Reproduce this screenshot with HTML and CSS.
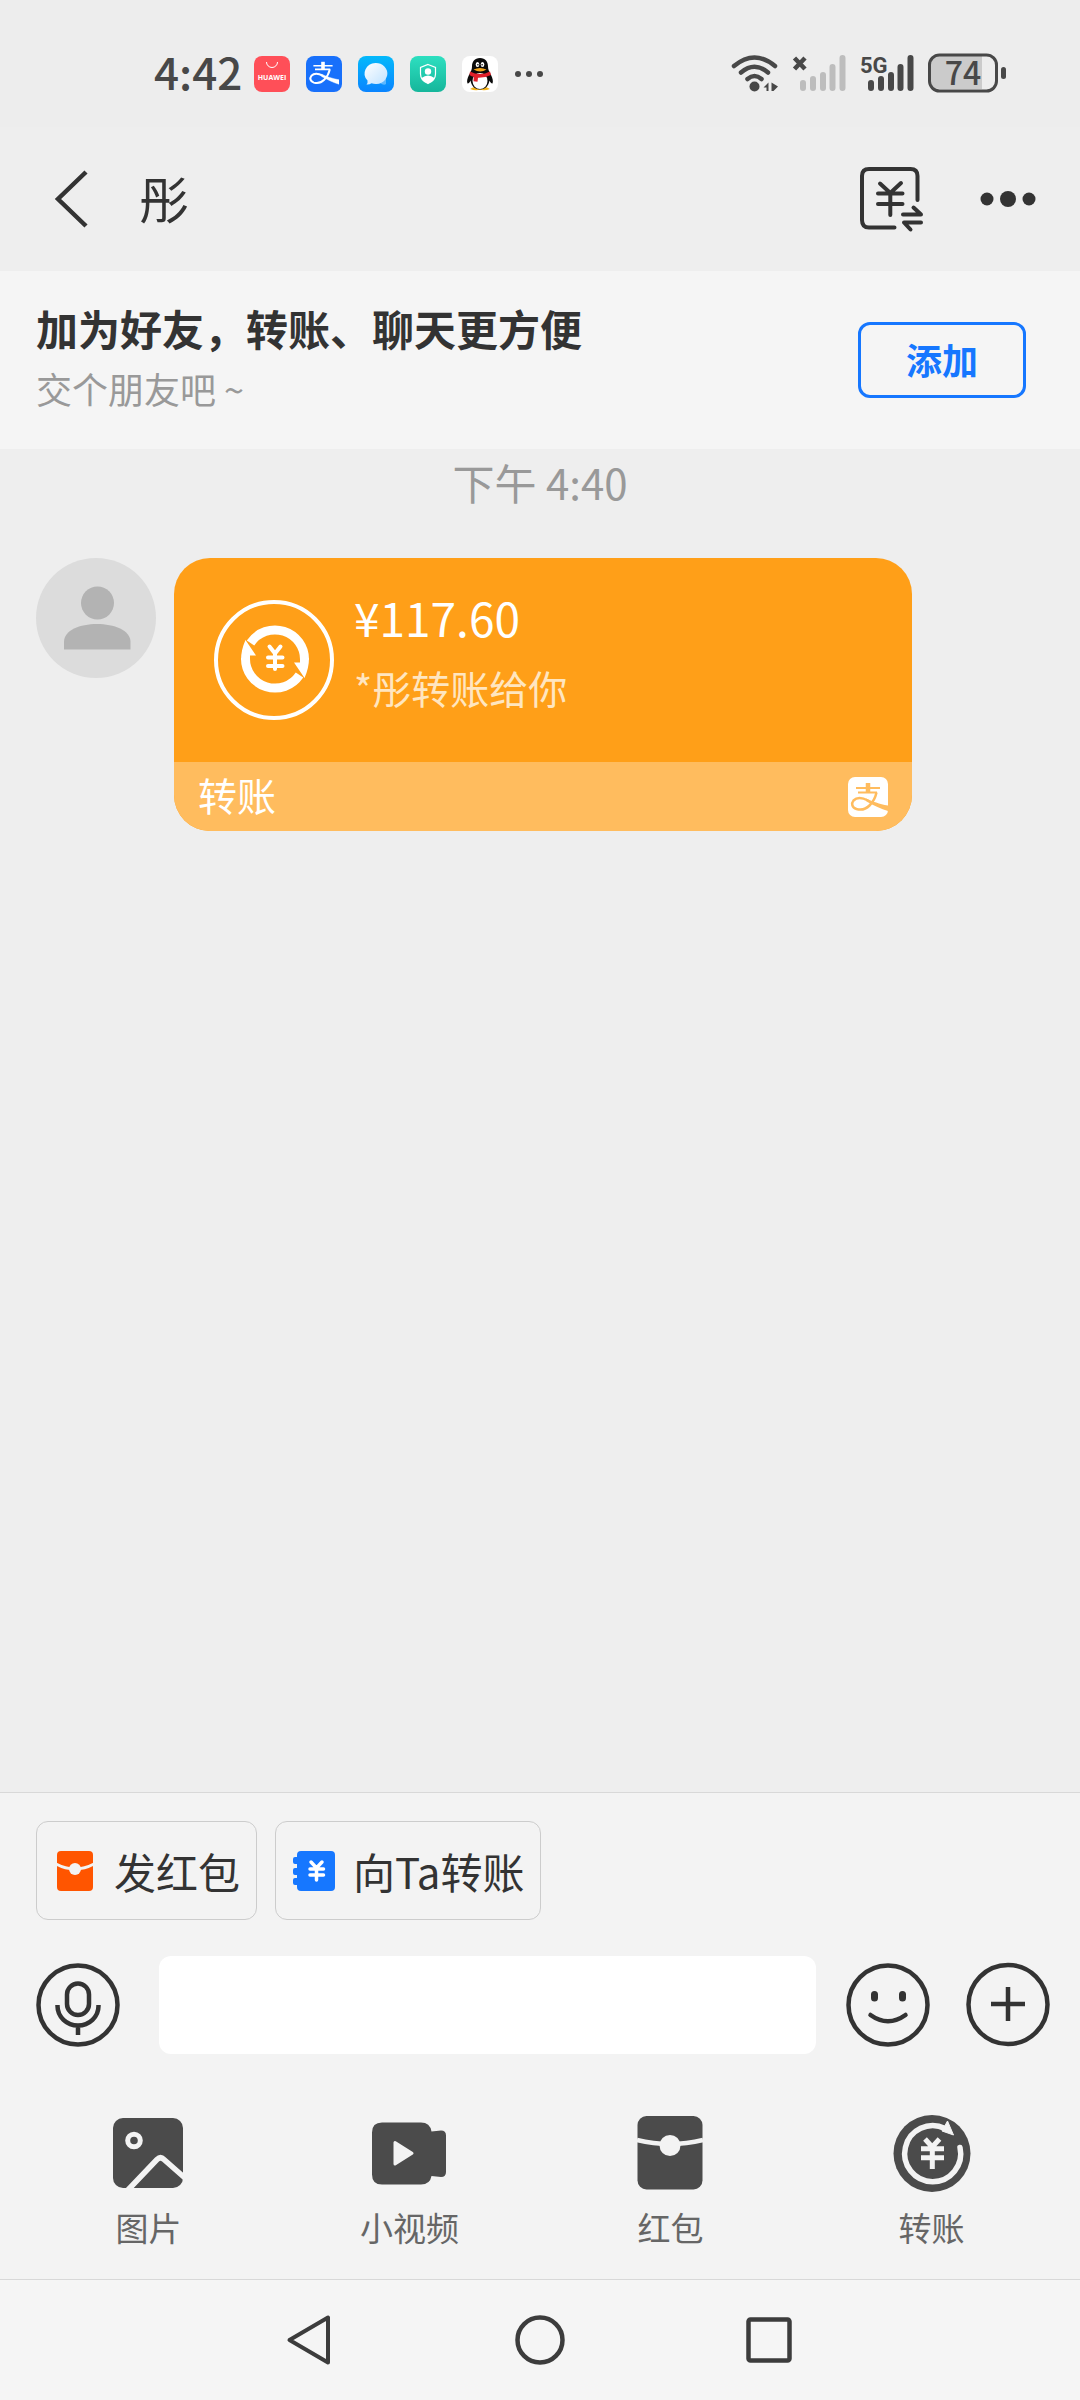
FILE: index.html
```html
<!DOCTYPE html>
<html lang="zh-CN">
<head>
<meta charset="utf-8">
<meta name="viewport" content="width=device-width, initial-scale=1">
<title>彤</title>
<link rel="stylesheet" href="styles.css">
</head>
<body>
<svg class="defs" aria-hidden="true">
  <defs>
    <symbol id="bars" viewBox="0 0 56 42">
      <path d="M11 30v5M21 26v9M31 22v13M40.500 14v21M50.500 5v30" fill="none" stroke="currentColor" stroke-width="6" stroke-linecap="round"/>
    </symbol>
    <symbol id="alipay" viewBox="0 0 40 40">
      <path d="M8 11H32M10 15.500H29" fill="none" stroke="currentColor" stroke-width="2"/>
      <path d="M20 6V16" fill="none" stroke="currentColor" stroke-width="4.500"/>
      <path d="M28.500 15.500C27.500 20 25 25 21.500 28.500C17.500 32.500 12 33 8.500 32C4 30.500 3 26.500 5.500 23.500C8.500 20.500 14 20.500 20 23.500" fill="none" stroke="currentColor" stroke-width="2.500"/>
      <path d="M18 21.500C25 24.500 31 27 40 28.500V34C33 32 26 28.500 18.500 24.500Z" fill="currentColor"/>
    </symbol>
  </defs>
</svg>

<header class="status">
  <div class="status-left">
    <span class="clock">4:42</span>
    <svg class="app" viewBox="0 0 36 36"><rect width="36" height="36" rx="8" fill="#ff4f58"/><path d="M12.500 6a5.500 5.500 0 0 0 11 0" fill="none" stroke="#fff" stroke-width="1"/><text class="app-name" x="18" y="23.500" text-anchor="middle">HUAWEI</text></svg>
    <svg class="app app-pay" viewBox="0 0 36 36"><rect width="36" height="36" rx="8" fill="#1870fb"/><g stroke="#fff" stroke-width=".6"><use href="#alipay" x="1" y="1" width="32" height="32"/></g></svg>
    <svg class="app" viewBox="0 0 36 36"><defs><linearGradient id="sky" x2="0" y2="1"><stop stop-color="#04b9fb"/><stop offset="1" stop-color="#0a84ff"/></linearGradient><linearGradient id="bub" x2="1" y2="1"><stop stop-color="#fff"/><stop offset="1" stop-color="#bfe2ff"/></linearGradient></defs><rect width="36" height="36" rx="8" fill="url(#sky)"/><path d="M22 27q4 3 6 1v-8z" fill="#5cb8ff"/><path d="M17.500 7a11.500 10.500 0 1 1-4 20.200Q11 29 8.500 28.500q1.500-2 1-4A11.500 10.500 0 0 1 17.500 7z" fill="url(#bub)"/></svg>
    <svg class="app" viewBox="0 0 36 36"><defs><linearGradient id="mint" x2="0" y2="1"><stop stop-color="#2ddfc0"/><stop offset="1" stop-color="#16b69b"/></linearGradient></defs><rect width="36" height="36" rx="8" fill="url(#mint)"/><path d="M18 8.500l7.500 3V18q0 6.500-7.500 9.500Q10.500 24.500 10.500 18v-6.500z" fill="none" stroke="#fff" stroke-width="1.200"/><circle cx="18" cy="15.500" r="3.200" fill="#fff"/><path d="M11.500 22q6.500-5 13 0-2 4-6.500 5.500Q13.500 26 11.500 22z" fill="#fff"/></svg>
    <svg class="app" viewBox="0 0 36 36"><rect width="36" height="36" rx="8" fill="#fff"/><path d="M8 33q5-3.500 10-1 5-2.500 10 1-5 2-10 .8Q13 35 8 33z" fill="#f5b31a"/><path d="M18 2c-5.500 0-8 4-8 8.500 0 3-1 5-3 8.500-1.500 3-2.500 6-1.500 8.500 1.500 0 2.500-2 3-3 .8 5 4 9 9.500 9s8.700-4 9.500-9c.5 1 1.500 3 3 3 1-2.500 0-5.500-1.500-8.500-2-3.500-3-5.500-3-8.500C26 6 23.500 2 18 2z" fill="#0b0b0b"/><ellipse cx="18" cy="25" rx="7.500" ry="8" fill="#fff"/><ellipse cx="15.500" cy="8.500" rx="1.800" ry="2.600" fill="#fff"/><ellipse cx="20.500" cy="8.500" rx="1.800" ry="2.600" fill="#fff"/><circle cx="15.900" cy="8.800" r=".8"/><circle cx="20.100" cy="8.800" r=".8"/><path d="M11.500 13.500q6.500-3 13 0-6 4-13 0z" fill="#f5a61a"/><path d="M8 15.500q10 5 20 0l1 3.500q-6 3-13 2.800l-.5 4-4-.5.300-4.500Q9.500 20.500 7.500 19z" fill="#e1202b"/></svg>
    <svg class="more-apps" viewBox="0 0 30 8" fill="currentColor"><circle cx="4" cy="4" r="3"/><circle cx="15" cy="4" r="3"/><circle cx="26" cy="4" r="3"/></svg>
  </div>
  <div class="status-right">
    <svg width="50" height="42" viewBox="0 0 50 42"><g fill="none" stroke="currentColor" stroke-width="4.500" stroke-linecap="round"><path d="M4 13Q24.500-4 45 13M11 19.500Q24.500 8 38 19.500M17.500 26Q24.500 20 31.500 26"/></g><circle cx="24.500" cy="33.500" r="5" fill="currentColor"/><path d="M38.500 29.500V38h-2v-3.500h-3zM41.500 29.500L48 33.500L43.500 38h-2z" fill="currentColor"/></svg>
    <svg width="56" height="42" viewBox="0 0 56 42"><use class="bars-off" href="#bars" width="56" height="42"/><path d="M2.500 5L13 16M13 5L2.500 16" stroke="currentColor" stroke-width="4.500"/></svg>
    <svg width="56" height="42" viewBox="0 0 56 42"><use href="#bars" width="56" height="42"/><text class="net" x="0" y="20">5G</text></svg>
    <svg width="78" height="42" viewBox="0 0 78 42"><path d="M12 3H54V36H12Q3 36 3 27V12Q3 3 12 3z" fill="#cbcbcb"/><rect x="1.500" y="2" width="67" height="36" rx="10" fill="none" stroke="currentColor" stroke-width="3"/><rect x="73" y="14" width="5" height="12" rx="2.500" fill="currentColor"/><text class="level" x="35" y="32" text-anchor="middle">74</text></svg>
  </div>
</header>

<nav class="topbar">
  <button class="icon-btn" aria-label="返回"><svg width="34" height="60" viewBox="0 0 34 60"><path d="M32 3L4 30L32 57" fill="none" stroke="currentColor" stroke-width="4.500"/></svg></button>
  <h1 class="peer">彤</h1>
  <button class="icon-btn" aria-label="转账记录"><svg width="66" height="66" viewBox="0 0 66 66" fill="none" stroke="currentColor" stroke-width="4" stroke-linecap="round" stroke-linejoin="round"><path d="M58.500 34V10Q58.500 3 51.500 3H10Q3 3 3 10V54Q3 61.500 10 61.500H35.500"/><path d="M21 17.500L31.300 27L42 17M19 27.500H43.500M19 38H43.500M31.300 27V49"/><path d="M44 48.500H62L54.500 41.500M62 56.500H45L51.500 63.500"/></svg></button>
  <button class="icon-btn" aria-label="更多"><svg width="56" height="56" viewBox="0 0 56 56" fill="currentColor"><circle cx="7" cy="28" r="6.500"/><circle cx="28" cy="28" r="8"/><circle cx="49" cy="28" r="6.500"/></svg></button>
</nav>

<section class="banner">
  <div class="banner-text">
    <h2>加为好友，转账、聊天更方便</h2>
    <p>交个朋友吧 ~</p>
  </div>
  <button class="add">添加</button>
</section>

<main class="chat">
  <time class="stamp">下午 4:40</time>
  <div class="message">
    <svg class="avatar" viewBox="0 0 120 120"><circle cx="60" cy="60" r="60" fill="#dcdcdc"/><circle cx="61.500" cy="45" r="16.500" fill="#b3b3b3"/><path d="M28 91.500V84C28 72 44 66 61 66S94.500 72 94.500 84V91.500z" fill="#b3b3b3"/></svg>
    <a class="card" href="#transfer">
      <div class="card-body">
        <svg class="coin" viewBox="0 0 120 120"><circle cx="60" cy="60" r="58" fill="none" stroke="#fff" stroke-width="4"/><g id="half"><path d="M36.500 43A29.500 29.500 0 0 1 90.500 60" fill="none" stroke="#fff" stroke-width="9"/><path d="M86 57L95 58Q95 68 90.500 78L80 62.500H86z" fill="#fff"/></g><use href="#half" transform="rotate(180 61 59)"/><path d="M55.500 46.500L61 53.500L66.500 46.500M54 57.500H68.500M54 66H68.500M61 53V69" fill="none" stroke="#fff" stroke-width="4" stroke-linecap="round"/></svg>
        <div class="card-text">
          <strong>¥117.60</strong>
          <span>*彤转账给你</span>
        </div>
      </div>
      <div class="card-foot">
        <span>转账</span>
        <svg width="40" height="40" viewBox="0 0 40 40"><rect width="40" height="40" rx="7" fill="#fff"/><use href="#alipay" width="40" height="40"/></svg>
      </div>
    </a>
  </div>
</main>

<footer class="composer">
  <div class="chips">
    <button class="chip"><svg width="42" height="42" viewBox="0 0 42 42"><rect x="3" y="1" width="36" height="40" rx="4" fill="#ff5500"/><path d="M2 14Q21 24 40 14" fill="none" stroke="#f3f3f3" stroke-width="3"/><circle cx="21" cy="19" r="6" fill="#f3f3f3"/></svg>发红包</button>
    <button class="chip"><svg width="42" height="42" viewBox="0 0 42 42"><rect x="4" y="1" width="38" height="40" rx="4" fill="#1677ff"/><path d="M5 7H2Q0 7 0 9V12Q0 14 2 14H5zM5 18H2Q0 18 0 20V23Q0 25 2 25H5zM5 28H2Q0 28 0 30V33Q0 35 2 35H5z" fill="#1677ff"/><path d="M18 12L23.500 18L29 12M17 19H30.500M17 25H30.500M23.500 18V30" fill="none" stroke="#fff" stroke-width="3.500" stroke-linecap="round"/></svg>向Ta转账</button>
  </div>
  <div class="entry">
    <button class="icon-btn" aria-label="语音"><svg width="84" height="84" viewBox="0 0 84 84" fill="none" stroke="currentColor" stroke-width="4.500"><circle cx="42" cy="42" r="39.500"/><rect x="31" y="20.500" width="22" height="31.500" rx="11"/><path d="M21.500 42V43A20.500 19.500 0 0 0 62.500 43V42M42 62V72"/></svg></button>
    <input class="field" type="text" aria-label="消息">
    <button class="icon-btn smile" aria-label="表情"><svg width="84" height="84" viewBox="0 0 84 84" fill="none" stroke="currentColor" stroke-width="4.500" stroke-linecap="round"><circle cx="42" cy="42" r="39.500"/><path d="M24.500 52Q42 64.500 59.500 52"/><path d="M28.500 31.500V35M56.500 31.500V35" stroke-width="7"/></svg></button>
    <button class="icon-btn plus" aria-label="更多功能"><svg width="84" height="84" viewBox="0 0 84 84" fill="none" stroke="currentColor" stroke-width="4.500"><circle cx="42" cy="41.500" r="39.500"/><path d="M25 41H59M42 24V58"/></svg></button>
  </div>
  <div class="tools">
    <button class="tool"><svg width="78" height="78" viewBox="0 0 78 78"><rect x="3" y="4" width="70" height="70" rx="10" fill="#4b4b4b"/><circle cx="24" cy="26.500" r="6.300" fill="none" stroke="#f3f3f3" stroke-width="5"/><path d="M17 77L47 45.500Q50.500 42 54 45.500L75 64" fill="none" stroke="#f3f3f3" stroke-width="5.500"/></svg>图片</button>
    <button class="tool"><svg width="78" height="78" viewBox="0 0 78 78"><path d="M11 8.500H50Q59 8.500 60.500 17.500L70 16.500Q75 16.500 75 21.500V58Q75 63 70 63L60.500 62Q59 70.500 50 70.500H11Q1 70.500 1 60.500V18.500Q1 8.500 11 8.500z" fill="#4b4b4b"/><path d="M24 28.500V50L41 39.200z" fill="#f3f3f3" stroke="#f3f3f3" stroke-width="3" stroke-linejoin="round"/></svg>小视频</button>
    <button class="tool"><svg width="78" height="78" viewBox="0 0 78 78"><rect x="5.500" y="2" width="65" height="73.500" rx="9" fill="#4b4b4b"/><path d="M5 26Q38 34 71 26" fill="none" stroke="#f3f3f3" stroke-width="4.500"/><circle cx="38" cy="31.500" r="10.500" fill="#f3f3f3"/></svg>红包</button>
    <button class="tool"><svg width="78" height="78" viewBox="0 0 78 78"><circle cx="39" cy="39.500" r="38.500" fill="#4b4b4b"/><path d="M67 33.500A28 28 0 1 1 52 14.500" fill="none" stroke="#f3f3f3" stroke-width="5.500" stroke-linecap="round"/><path d="M54.500 7L60.500 21L49 17z" fill="#f3f3f3" stroke="#f3f3f3" stroke-linejoin="round"/><path d="M32 25L39.200 33L46.500 25M28 34.700H51M28 43.700H51M39.300 32V55" fill="none" stroke="#f3f3f3" stroke-width="5"/></svg>转账</button>
  </div>
</footer>

<nav class="sysnav">
  <button class="icon-btn" aria-label="系统返回"><svg width="50" height="50" viewBox="0 0 50 50"><path d="M43 2.500V47.500L4.500 25z" fill="none" stroke="currentColor" stroke-width="4" stroke-linejoin="round"/></svg></button>
  <button class="icon-btn" aria-label="主页"><svg width="50" height="50" viewBox="0 0 50 50"><circle cx="25" cy="25" r="22.500" fill="none" stroke="currentColor" stroke-width="4.500"/></svg></button>
  <button class="icon-btn" aria-label="最近任务"><svg width="50" height="50" viewBox="0 0 50 50"><rect x="3.500" y="4.500" width="41" height="41" rx="2" fill="none" stroke="currentColor" stroke-width="4.500"/></svg></button>
</nav>
</body>
</html>
```

FILE: styles.css
```css
* {
  box-sizing: border-box;
}

body {
  margin: 0;
  min-height: 100vh;
  display: flex;
  flex-direction: column;
  background: #eeeeee;
  color: #333333;
  font-family: "Noto Sans CJK SC", "Noto Sans", sans-serif;
}

h1,
h2,
p {
  margin: 0;
}

svg {
  display: block;
  flex: none;
  overflow: visible;
}

button {
  margin: 0;
  padding: 0;
  border: 0;
  background: none;
  color: inherit;
  font: inherit;
}

.defs {
  position: absolute;
  width: 0;
  height: 0;
}

/* Status bar */
.status {
  display: flex;
  justify-content: space-between;
  padding: 53px 74px 32px 154px;
  background: #ededed;
  color: #484848;
}

.status-left {
  display: flex;
  align-items: center;
  gap: 16px;
  height: 42px;
}

.clock {
  width: 84px;
  padding-bottom: 6px;
  font-size: 44px;
  line-height: 36px;
  font-weight: 500;
}

.app {
  width: 36px;
  height: 36px;
}

.app-name {
  font: bold 7px "Open Sans", sans-serif;
  fill: #ffffff;
}

.app-pay {
  color: #ffffff;
}

.more-apps {
  width: 30px;
  height: 8px;
}

.status-right {
  display: flex;
  gap: 12px;
}

.bars-off {
  color: #bdbdbd;
}

.net {
  font: bold 22px Roboto, sans-serif;
  fill: currentColor;
}

.level {
  font-size: 32px;
  font-weight: 500;
  fill: currentColor;
}

/* Title bar */
.topbar {
  display: flex;
  align-items: center;
  height: 144px;
  padding: 0 44px 0 54px;
}

.peer {
  flex: 1;
  padding-left: 51px;
  padding-bottom: 4px;
  font-size: 50px;
  line-height: 72px;
  font-weight: 400;
}

.topbar .icon-btn:last-child {
  margin-left: 55px;
}

/* Add-friend banner */
.banner {
  display: flex;
  align-items: center;
  justify-content: space-between;
  padding: 27px 54px 27px 36px;
  background: #f5f5f5;
}

.banner-text {
  padding-bottom: 4px;
}

.banner h2 {
  font-size: 42px;
  line-height: 60px;
  font-weight: 700;
}

.banner p {
  color: #999999;
  font-size: 36px;
  line-height: 60px;
}

.add {
  width: 168px;
  height: 76px;
  padding-bottom: 2px;
  border: 3px solid #1677ff;
  border-radius: 12px;
  color: #1677ff;
  font-size: 36px;
  line-height: 60px;
  font-weight: 700;
}

/* Conversation */
.chat {
  flex: 1;
  padding: 3px 36px 36px;
}

.stamp {
  display: block;
  color: #999999;
  font-size: 42px;
  line-height: 60px;
  text-align: center;
}

.message {
  display: flex;
  align-items: flex-start;
  gap: 18px;
  margin-top: 46px;
  padding-right: 132px;
}

.avatar {
  width: 120px;
  height: 120px;
}

.card {
  flex: 1;
  overflow: hidden;
  border-radius: 36px;
  background: #ff9f18;
  color: #ffffff;
  text-decoration: none;
}

.card-body {
  display: flex;
  align-items: flex-start;
  gap: 20px;
  padding: 24px 40px 40px;
}

.coin {
  width: 120px;
  height: 120px;
  margin-top: 18px;
}

.card-text {
  display: flex;
  flex-direction: column;
  line-height: 70px;
}

.card-text strong {
  font-size: 46px;
  font-weight: 400;
}

.card-text span {
  font-size: 39px;
  color: #ffe6c0;
}

.card-foot {
  display: flex;
  align-items: center;
  justify-content: space-between;
  padding: 0 24px;
  background: #ffbc5e;
  font-size: 39px;
}

.card-foot span {
  padding-bottom: 5px;
  line-height: 64px;
}

.card-foot svg {
  color: #ffbc5e;
}

/* Composer */
.composer {
  padding: 28px 0;
  border-top: 1px solid #d8d8d8;
  background: #f3f3f3;
}

.chips {
  display: flex;
  gap: 18px;
  padding: 0 36px;
}

.chip {
  display: flex;
  align-items: center;
  gap: 18px;
  height: 99px;
  padding: 0 16px 0 17px;
  border: 1px solid #cccccc;
  border-radius: 12px;
  font-size: 42px;
  line-height: 60px;
}

.entry {
  display: flex;
  align-items: center;
  padding: 36px 30px 0 36px;
}

.field {
  flex: 1;
  min-width: 0;
  height: 98px;
  margin: 0 30px 0 39px;
  padding: 0 24px;
  border: 0;
  border-radius: 12px;
  background: #ffffff;
  font: inherit;
  font-size: 42px;
}

.plus {
  margin-left: 36px;
}

.tools {
  display: grid;
  grid-template-columns: repeat(4, 1fr);
  padding: 60px 18px 0;
}

.tool {
  display: flex;
  flex-direction: column;
  align-items: center;
  gap: 11px;
  color: #666666;
  font-size: 33px;
  line-height: 48px;
}

/* System navigation */
.sysnav {
  display: flex;
  align-items: center;
  justify-content: center;
  gap: 180px;
  height: 121px;
  border-top: 1px solid #d8d8d8;
  background: #f5f5f5;
  color: #3c3c3c;
}
```
